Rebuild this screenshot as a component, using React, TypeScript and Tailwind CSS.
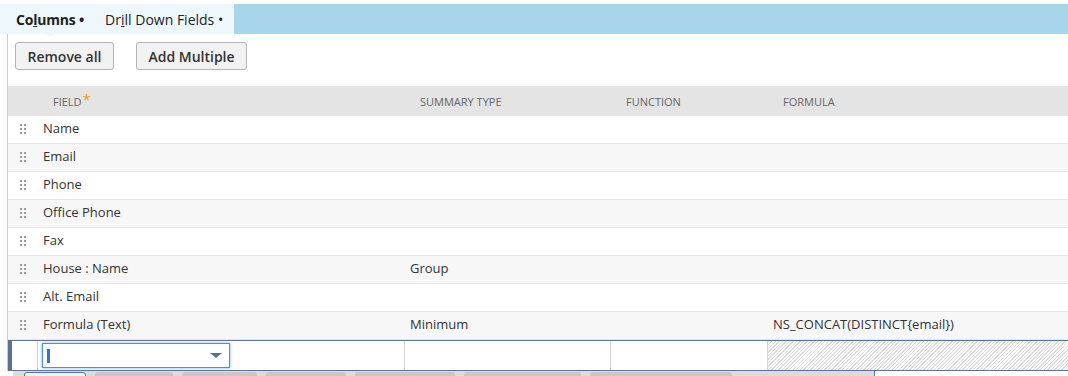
import React from 'react';

const rows = [
  { field: 'Name', summary: '', formula: '' },
  { field: 'Email', summary: '', formula: '' },
  { field: 'Phone', summary: '', formula: '' },
  { field: 'Office Phone', summary: '', formula: '' },
  { field: 'Fax', summary: '', formula: '' },
  { field: 'House : Name', summary: 'Group', formula: '' },
  { field: 'Alt. Email', summary: '', formula: '' },
  { field: 'Formula (Text)', summary: 'Minimum', formula: 'NS_CONCAT(DISTINCT{email})' },
];

const cols = 'grid grid-cols-[29px_367px_206px_157px_1fr]';

function Handle() {
  return (
    <div className="grid grid-cols-[2px_2px] gap-x-[2px] gap-y-[2px] pl-[12px]">
      {[0, 1, 2, 3, 4, 5].map((i) => (
        <span key={i} className="w-[2px] h-[2px] bg-[#9a9a9a]" />
      ))}
    </div>
  );
}

export default function App() {
  return (
    <div className="w-[1068px] h-[376px] overflow-hidden bg-white font-['Open_Sans',sans-serif] text-[#333]">
      {/* tabs */}
      <div className="mt-[4px] h-[30px] flex bg-[#a8d5ec]">
        <div className="flex items-center w-[234px] bg-[#eef7fb] text-[14px] text-[#222] pt-[1px]">
          <span className="relative ml-[16px] font-bold tracking-[-0.2px]">
            Co<u>l</u>umns •
            <span className="absolute left-[26px] top-[23px] w-0 h-0 border-x-[8px] border-x-transparent border-t-[5px] border-t-[#eef7fb]" />
          </span>
          <span className="ml-[21px]">
            Dr<u>i</u>ll Down Fields •
          </span>
        </div>
      </div>

      <div className="ml-[7px] border-l border-[#cccccc] flex flex-col">
        {/* buttons */}
        <div className="h-[52px] flex items-start pt-[8px] pl-[7px] gap-[22px]">
          <button className="h-[28px] w-[99px] rounded-[3px] border border-[#b4b4b4] bg-[#f2f2f2] text-[14px] font-semibold text-[#333]">
            Remove all
          </button>
          <button className="h-[28px] w-[111px] rounded-[3px] border border-[#b4b4b4] bg-[#f2f2f2] text-[14px] font-semibold text-[#333]">
            Add Multiple
          </button>
        </div>

        {/* header */}
        <div className={`${cols} h-[30px] items-center bg-[#e4e4e4] text-[11px] uppercase text-[#666] pt-[2px]`}>
          <div />
          <div className="pl-[16px] flex items-start">
            Field<span className="text-[#e8a030] text-[15px] leading-[10px] ml-[1px]">*</span>
          </div>
          <div className="pl-[16px]">Summary Type</div>
          <div className="pl-[16px]">Function</div>
          <div className="pl-[16px]">Formula</div>
        </div>

        {/* rows */}
        {rows.map((r, i) => (
          <div
            key={r.field}
            className={`${cols} h-[28px] items-center text-[13px] border-b border-[#e6e6e6] pb-[2px] ${i % 2 === 1 ? 'bg-[#f7f7f7]' : 'bg-white'}`}
          >
            <Handle />
            <div className="pl-[6px]">{r.field}</div>
            <div className="pl-[6px]">{r.summary}</div>
            <div />
            <div className="pl-[6px]">{r.formula}</div>
          </div>
        ))}

        {/* edit row */}
        <div className="grid grid-cols-[26px_367px_206px_157px_1fr] h-[31px] border-y border-[#5e7292] border-l-[4px] border-l-[#5b7196]">
          <div className="border-r border-[#d4d4d4]" />
          <div className="border-r border-[#d4d4d4] pl-[4px] pt-[2px]">
            <div className="relative w-[188px] h-[25px] border border-[#4a8fe0] shadow-[0_0_3px_#7fb3ee] bg-white flex items-center">
              <span className="ml-[4px] w-[3px] h-[14px] bg-[#3b6fd4]" />
              <span className="absolute right-[7px] top-[9px] w-0 h-0 border-x-[6px] border-x-transparent border-t-[5px] border-t-[#5f6f84]" />
            </div>
          </div>
          <div className="border-r border-[#d4d4d4]" />
          <div className="border-r border-[#d4d4d4]" />
          <div className="bg-[repeating-linear-gradient(135deg,#dcdcdc_0px,#dcdcdc_1px,#ffffff_1px,#ffffff_2.5px)]" />
        </div>
      </div>

      {/* bottom button strip (cut off) */}
      <div className="ml-[13px] w-[862px] h-[6px] bg-[#dcdcdc] border-r border-[#5e7292] flex items-start gap-[9px] pl-[11px] pt-[1px]">
        <span className="w-[62px] h-[6px] rounded-t-[3px] border border-[#5b7196] bg-[#eef2f8]" />
        <span className="w-[78px] h-[6px] rounded-t-[3px] bg-[#c8c8c8]" />
        <span className="w-[75px] h-[6px] rounded-t-[3px] bg-[#c8c8c8]" />
        <span className="w-[80px] h-[6px] rounded-t-[3px] bg-[#c8c8c8]" />
        <span className="w-[100px] h-[6px] rounded-t-[3px] bg-[#c8c8c8]" />
        <span className="w-[117px] h-[6px] rounded-t-[3px] bg-[#c8c8c8]" />
        <span className="w-[142px] h-[6px] rounded-t-[3px] bg-[#c8c8c8]" />
      </div>
    </div>
  );
}
